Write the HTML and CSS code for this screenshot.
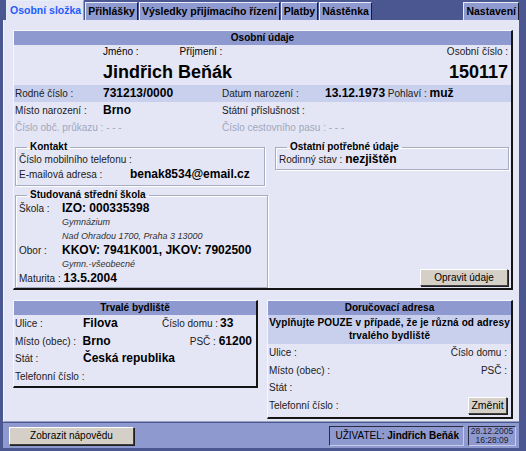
FILE: index.html
```html
<!DOCTYPE html>
<html lang="cs">
<head>
  <meta charset="UTF-8" />
  <title>Osobní složka</title>
  <link rel="stylesheet" href="styles.css">
</head>
<body>
  <div class="tabs">
    <div class="tab active">Osobní složka</div>
    <div class="tab">Přihlášky</div>
    <div class="tab">Výsledky přijímacího řízení</div>
    <div class="tab">Platby</div>
    <div class="tab">Nástěnka</div>
    <div class="tab right">Nastavení</div>
  </div>

  <div class="main">
    <div class="box personal">
      <div class="box-head">Osobní údaje</div>

      <div class="names">
        <div class="name-col">
          <div class="name-labels"><span>Jméno :</span><span class="surname-label">Příjmení :</span></div>
          <div class="big">Jindřich Beňák</div>
        </div>
        <div class="num-col">
          <div class="lbl">Osobní číslo :</div>
          <div class="big">150117</div>
        </div>
      </div>

      <div class="row stripe">
        <span class="lbl c1">Rodné číslo :</span><span class="val c2">731213/0000</span>
        <span class="lbl c3">Datum narození :</span><span class="val">13.12.1973</span>
        <span class="lbl">&nbsp;Pohlaví :&nbsp;</span><span class="val">muž</span>
      </div>
      <div class="row">
        <span class="lbl c1">Místo narození :</span><span class="val c2">Brno</span>
        <span class="lbl c3">Státní příslušnost :</span>
      </div>
      <div class="row muted">
        <span class="lbl c1">Číslo obč. průkazu : - - -</span><span class="c2"></span>
        <span class="lbl">Číslo cestovního pasu : - - -</span>
      </div>

      <div class="groups">
        <div class="left-groups">
          <fieldset class="contact">
            <legend>Kontakt</legend>
            <div class="frow first"><span class="lbl">Číslo mobilního telefonu :</span></div>
            <div class="frow"><span class="lbl w111">E-mailová adresa :</span><span class="val">benak8534@email.cz</span></div>
          </fieldset>
          <fieldset class="school">
            <legend>Studovaná střední škola</legend>
            <div class="srow"><span class="lbl w43">Škola :</span><span class="val">IZO: 000335398</span></div>
            <div class="srow note">Gymnázium</div>
            <div class="srow note">Nad Ohradou 1700, Praha 3 13000</div>
            <div class="srow"><span class="lbl w43">Obor :</span><span class="val">KKOV: 7941K001, JKOV: 7902500</span></div>
            <div class="srow note">Gymn.-všeobecné</div>
            <div class="srow"><span class="lbl">Maturita :&nbsp;</span><span class="val">13.5.2004</span></div>
          </fieldset>
        </div>
        <div class="right-groups">
          <fieldset class="other">
            <legend>Ostatní potřebné údaje</legend>
            <div class="frow first"><span class="lbl">Rodinný stav :&nbsp;</span><span class="val">nezjištěn</span></div>
          </fieldset>
          <button class="btn edit">Opravit údaje</button>
        </div>
      </div>
    </div>

    <div class="addresses">
      <div class="box addr">
        <div class="box-head">Trvalé bydliště</div>
        <div class="arow"><span class="lbl w68">Ulice :</span><span class="val w79">Filova</span><span class="lbl rl">Číslo domu :&nbsp;</span><span class="val">33</span></div>
        <div class="arow"><span class="lbl w68">Místo (obec) :</span><span class="val w79">Brno</span><span class="lbl rl">PSČ :&nbsp;</span><span class="val">61200</span></div>
        <div class="arow"><span class="lbl w68">Stát :</span><span class="val">Česká republika</span></div>
        <div class="arow"><span class="lbl">Telefonní číslo :</span></div>
      </div>

      <div class="box addr delivery">
        <div class="box-head">Doručovací adresa</div>
        <div class="sub-head">Vyplňujte POUZE v případě, že je různá od adresy trvalého bydliště</div>
        <div class="arow"><span class="lbl">Ulice :</span><span class="lbl push">Číslo domu :</span></div>
        <div class="arow"><span class="lbl">Místo (obec) :</span><span class="lbl push">PSČ :</span></div>
        <div class="arow"><span class="lbl">Stát :</span></div>
        <div class="arow last"><span class="lbl">Telefonní číslo :</span><button class="btn change">Změnit</button></div>
      </div>
    </div>
  </div>

  <div class="footer">
    <button class="btn help">Zobrazit nápovědu</button>
    <div class="user">UŽIVATEL: <b>Jindřich Beňák</b></div>
    <div class="clock">28.12.2005<br>16:28:09</div>
  </div>
</body>
</html>
```

FILE: styles.css
```css
body {
  margin: 0;
  width: 526px;
  height: 451px;
  background: #4b5790;
  font-family: 'Liberation Sans', Arial, sans-serif;
  font-size: 10px;
  color: #000;
  overflow: hidden;
}
.tabs {
  display: flex;
  align-items: flex-end;
  height: 20px;
  padding: 0 7px 0 6px;
  gap: 1px;
}
.tab {
  height: 17px;
  line-height: 17px;
  padding: 0 2px;
  background: #8f9bd0;
  border-top: 1px solid #e8ebf8;
  border-left: 1px solid #e8ebf8;
  border-right: 1px solid #1c1c2c;
  font-weight: bold;
  font-size: 10.5px;
}
.tab.active {
  height: 19px;
  line-height: 19px;
  background: #e4e6f6;
  color: #1f5cff;
  border-right: 1px solid #9aa0c0;
  padding: 0 2px 0 3px;
}
.tab.right {
  margin-left: auto;
}
.main {
  margin: 0 7px 0 3px;
  height: 381px;
  padding: 10px 6px 10px 9px;
  background: #e4e6f6;
  border-left: 1px solid #f4f5fc;
  border-bottom: 1px solid #9aa0c0;
}
.box {
  background: #e4e6f6;
  border-top: 1px solid #f6f7fd;
  border-left: 1px solid #f6f7fd;
  border-right: 2px solid #151515;
  border-bottom: 2px solid #151515;
}
.box-head {
  height: 14px;
  line-height: 14px;
  background: #8e99cf;
  text-align: center;
  font-weight: bold;
  font-size: 10px;
}
.lbl {
  color: #202020;
  font-size: 10px;
  white-space: nowrap;
}
.val {
  font-weight: bold;
  font-size: 12px;
  white-space: nowrap;
}
.personal {
  height: 257px;
  overflow: hidden;
}
.names {
  display: flex;
  justify-content: space-between;
  padding: 1px 3px 0 89px;
  height: 39px;
}
.name-labels {
  height: 12px;
  line-height: 12px;
}
.surname-label {
  margin-left: 41px;
}
.num-col .lbl {
  display: block;
  height: 12px;
  line-height: 12px;
}
.big {
  font-weight: bold;
  font-size: 18px;
  line-height: 22px;
  margin-top: 3px;
}
.num-col {
  text-align: right;
}
.row {
  display: flex;
  align-items: baseline;
  height: 17px;
  line-height: 17px;
  padding-left: 1px;
}
.row.stripe {
  background: #c8d0ee;
}
.c1 { width: 88px; }
.c2 { width: 119px; }
.c3 { width: 103px; }
.muted .lbl { color: #a2a6bc; }
.groups {
  display: flex;
  gap: 7px;
  padding: 5px 2px 0 1px;
}
.left-groups {
  display: flex;
  flex-direction: column;
  gap: 3px;
  width: 253px;
}
.right-groups {
  flex: 1;
  height: 147px;
  display: flex;
  flex-direction: column;
  align-items: flex-end;
  justify-content: space-between;
}
fieldset {
  margin: 0;
  padding: 0 3px 2px 3px;
  border: 1px solid #a8acc0;
  box-shadow: inset 1px 1px 0 #fff, 1px 1px 0 #fff;
}
.contact {
  width: 250px;
  box-sizing: border-box;
}
.other {
  align-self: stretch;
  padding-bottom: 3px;
}
legend {
  font-weight: bold;
  font-size: 10px;
  padding: 0 3px;
  margin-left: 8px;
  line-height: 12px;
}
.frow {
  display: flex;
  align-items: baseline;
  height: 17px;
  line-height: 17px;
}
.frow.first {
  height: 13px;
  line-height: 13px;
}
.srow {
  display: flex;
  align-items: baseline;
  height: 14px;
  line-height: 14px;
}
.w111 { width: 111px; }
.w43 { width: 43px; }
.w68 { width: 68px; }
.w79 { width: 79px; }
.note {
  font-style: italic;
  font-size: 9px;
  color: #303030;
  padding-left: 43px;
}
.btn {
  font-family: 'Liberation Sans', Arial, sans-serif;
  font-size: 10px;
  background: #d4d0c8;
  border-top: 1px solid #fff;
  border-left: 1px solid #fff;
  border-right: 1px solid #404040;
  border-bottom: 1px solid #404040;
  box-shadow: 1px 1px 0 #202020;
  padding: 0;
  color: #000;
}
.edit {
  width: 88px;
  height: 17px;
  margin-bottom: 2px;
  margin-right: 1px;
}
.addresses {
  display: flex;
  justify-content: space-between;
  margin-top: 10px;
  align-items: flex-start;
}
.addr {
  width: 242px;
  height: 85px;
}
.delivery {
  width: 243px;
  height: 116px;
}
.arow {
  display: flex;
  align-items: baseline;
  height: 17.5px;
  line-height: 17.5px;
  padding: 0 4px 0 1px;
}
.rl {
  width: 58px;
  text-align: right;
}
.push {
  margin-left: auto;
}
.sub-head {
  background: #c8d0ee;
  text-align: center;
  font-weight: bold;
  font-size: 10px;
  line-height: 13px;
  padding: 1px 0 2px;
  letter-spacing: 0.1px;
}
.delivery .arow.last {
  height: 20px;
}
.change {
  margin-left: auto;
  width: 39px;
  height: 17px;
  align-self: flex-start;
  font-size: 10.5px;
}
.footer {
  margin: 1px 7px 0 3px;
  height: 25px;
  background: #8e99cf;
  display: flex;
  align-items: center;
  padding: 0 3px 0 6px;
  gap: 4px;
}
.help {
  width: 125px;
  height: 18px;
  margin-right: auto;
}
.user {
  height: 18px;
  line-height: 18px;
  padding: 0 4px 0 5px;
  border: 1px solid #2a2a40;
  border-right-color: #c8cce8;
  border-bottom-color: #c8cce8;
  font-size: 10px;
}
.clock {
  width: 46px;
  height: 18px;
  border: 1px solid #2a2a40;
  border-right-color: #c8cce8;
  border-bottom-color: #c8cce8;
  font-size: 8.5px;
  line-height: 9px;
  text-align: center;
  color: #202030;
}
```
